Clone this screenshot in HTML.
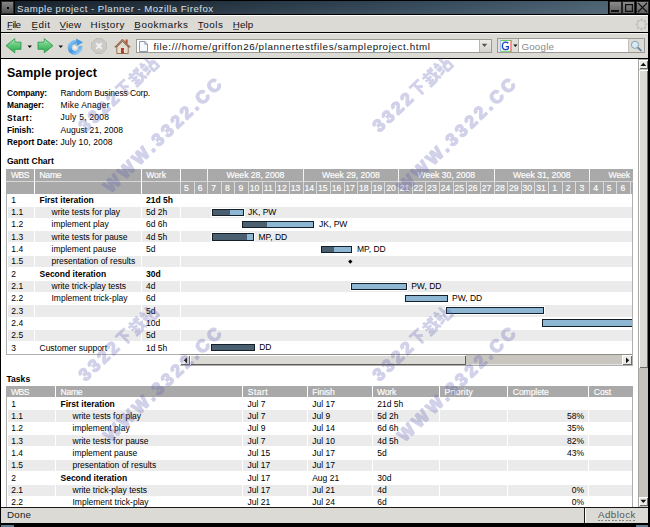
<!DOCTYPE html><html><head><meta charset="utf-8"><style>html,body{margin:0;padding:0;width:650px;height:527px;overflow:hidden;background:#fff}.t{position:absolute;white-space:nowrap;font-family:"Liberation Sans",sans-serif;line-height:1}</style></head><body><div style="position:relative;width:650px;height:527px;overflow:hidden"><div style="position:absolute;left:0px;top:0px;width:650px;height:527px;background:#000"></div><div style="position:absolute;left:15px;top:1px;width:593px;height:13px;background:linear-gradient(90deg,#17222d 0%,#23323f 35%,#34495a 70%,#4a6170 100%)"></div><div style="position:absolute;left:15px;top:1px;width:593px;height:13px;background:linear-gradient(180deg,rgba(255,255,255,0.00),rgba(255,255,255,0.06))"></div><div style="position:absolute;left:1px;top:1px;width:13px;height:13px;background:linear-gradient(180deg,#8a8a8a,#4a4a4a);box-shadow:inset 0 0 0 1px #2a2a2a"></div><div style="position:absolute;left:6.5px;top:6.5px;width:2px;height:2px;background:#000"></div><div style="position:absolute;left:608.5px;top:1px;width:13px;height:13px;background:linear-gradient(180deg,#8f8f8f,#5a5a5a);box-shadow:inset 0 0 0 1px #222"></div><div style="position:absolute;left:622px;top:1px;width:13px;height:13px;background:linear-gradient(180deg,#8f8f8f,#5a5a5a);box-shadow:inset 0 0 0 1px #222"></div><div style="position:absolute;left:635.5px;top:1px;width:13px;height:13px;background:linear-gradient(180deg,#8f8f8f,#5a5a5a);box-shadow:inset 0 0 0 1px #222"></div><div style="position:absolute;left:611px;top:10px;width:8px;height:1.5px;background:#111"></div><div style="position:absolute;left:624.5px;top:3.5px;width:8px;height:8px;box-shadow:inset 0 0 0 1.2px #111"></div><div style="position:absolute;left:1px;top:15px;width:647px;height:17px;background:#dcdad5;border-top:1px solid #fff;box-sizing:border-box"></div><div style="position:absolute;left:1px;top:33px;width:647px;height:25px;background:#dcdad5;border-top:1px solid #f4f3f1;box-sizing:border-box"></div><div style="position:absolute;left:1px;top:59px;width:638px;height:448px;background:#fff"></div><div style="position:absolute;left:7px;top:29px;width:5px;height:1px;background:#555"></div><div style="position:absolute;left:31.5px;top:29px;width:5px;height:1px;background:#555"></div><div style="position:absolute;left:59.5px;top:29px;width:6px;height:1px;background:#555"></div><div style="position:absolute;left:104px;top:29px;width:4px;height:1px;background:#555"></div><div style="position:absolute;left:134.3px;top:29px;width:6px;height:1px;background:#555"></div><div style="position:absolute;left:197.8px;top:29px;width:5px;height:1px;background:#555"></div><div style="position:absolute;left:232.7px;top:29px;width:6px;height:1px;background:#555"></div><div style="position:absolute;left:135.5px;top:38.5px;width:356px;height:14.5px;background:#fff;box-shadow:inset 0 0 0 1px #9c9a94"></div><div style="position:absolute;left:479px;top:39.5px;width:11.5px;height:12.5px;background:linear-gradient(180deg,#eeede9,#d5d3ce);border-left:1px solid #b8b6b0;box-sizing:border-box"></div><div style="position:absolute;left:497px;top:38.3px;width:147.5px;height:14.7px;background:#fff;box-shadow:inset 0 0 0 1px #9c9a94"></div><div style="position:absolute;left:498px;top:39.3px;width:20.5px;height:12.7px;background:#e2e0db;border-right:1px solid #a9a7a2;box-sizing:border-box"></div><div style="position:absolute;left:627.5px;top:39.3px;width:16px;height:12.7px;background:#dedcd7;border-left:1px solid #c3c1bc;box-sizing:border-box"></div><div style="position:absolute;left:638px;top:59px;width:10px;height:448px;background:#c5c2bc;border-left:1px solid #a8a6a1;box-sizing:border-box"></div><div style="position:absolute;left:638px;top:59px;width:10px;height:10.2px;background:#ebeae6;box-shadow:inset 1px 1px 0 #a8a6a1,inset 2px 2px 0 #fff,inset -1px -1px 0 #6e6c68"></div><div style="position:absolute;left:638px;top:70px;width:10px;height:298px;background:#dcdad5;box-shadow:inset 1px 0 0 #a8a6a1,inset 2px 1px 0 #fff,inset -1px -1px 0 #6e6c68"></div><div style="position:absolute;left:638px;top:496.5px;width:10px;height:9.5px;background:#ebeae6;box-shadow:inset 1px 0 0 #a8a6a1,inset 2px 1px 0 #fff,inset -1px -1px 0 #6e6c68"></div><div style="position:absolute;left:1px;top:507px;width:647px;height:16px;background:#dcdad5;border-top:1px solid #1a1a1a;box-sizing:border-box"></div><div style="position:absolute;left:584px;top:508px;width:1px;height:15px;background:#1a1a1a"></div><div style="position:absolute;left:585px;top:508px;width:1px;height:15px;background:#fff"></div><div style="position:absolute;left:598px;top:519.5px;width:37px;height:1px;background:repeating-linear-gradient(90deg,#888 0 2px,transparent 2px 3.5px)"></div><div style="position:absolute;left:1px;top:525px;width:13px;height:1.5px;background:#5b7a8e"></div><div style="position:absolute;left:635.5px;top:525px;width:12.5px;height:1.5px;background:#5b7a8e"></div><div style="position:absolute;left:6px;top:169px;width:1px;height:186px;background:#b0b0b0"></div><div style="position:absolute;left:6px;top:353.5px;width:174.5px;height:1px;background:#b0b0b0"></div><div style="position:absolute;left:632px;top:169px;width:1px;height:197px;background:#b0b0b0"></div><div style="position:absolute;left:180.4px;top:364.5px;width:452.6px;height:1px;background:#b0b0b0"></div><div style="position:absolute;left:6px;top:169.2px;width:626.5px;height:11.4px;background:#a9a9a9"></div><div style="position:absolute;left:6px;top:182px;width:626.5px;height:11.8px;background:#a9a9a9"></div><div style="position:absolute;left:6px;top:180.6px;width:626.5px;height:1.4px;background:#d8d8d8"></div><div style="position:absolute;left:33.6px;top:169.2px;width:1.2px;height:24.6px;background:#fff"></div><div style="position:absolute;left:141.2px;top:169.2px;width:1.2px;height:24.6px;background:#fff"></div><div style="position:absolute;left:179.6px;top:169.2px;width:1.2px;height:24.6px;background:#fff"></div><div style="position:absolute;left:207.202px;top:169.2px;width:1px;height:11.4px;background:#f4f4f4"></div><div style="position:absolute;left:302.654px;top:169.2px;width:1px;height:11.4px;background:#f4f4f4"></div><div style="position:absolute;left:398.106px;top:169.2px;width:1px;height:11.4px;background:#f4f4f4"></div><div style="position:absolute;left:493.558px;top:169.2px;width:1px;height:11.4px;background:#f4f4f4"></div><div style="position:absolute;left:589.01px;top:169.2px;width:1px;height:11.4px;background:#f4f4f4"></div><div style="position:absolute;left:179.93px;top:182px;width:1px;height:11.8px;background:#dadada"></div><div style="position:absolute;left:193.566px;top:182px;width:1px;height:11.8px;background:#dadada"></div><div style="position:absolute;left:207.202px;top:182px;width:1px;height:11.8px;background:#dadada"></div><div style="position:absolute;left:220.83800000000002px;top:182px;width:1px;height:11.8px;background:#dadada"></div><div style="position:absolute;left:234.474px;top:182px;width:1px;height:11.8px;background:#dadada"></div><div style="position:absolute;left:248.11px;top:182px;width:1px;height:11.8px;background:#dadada"></div><div style="position:absolute;left:261.746px;top:182px;width:1px;height:11.8px;background:#dadada"></div><div style="position:absolute;left:275.382px;top:182px;width:1px;height:11.8px;background:#dadada"></div><div style="position:absolute;left:289.01800000000003px;top:182px;width:1px;height:11.8px;background:#dadada"></div><div style="position:absolute;left:302.654px;top:182px;width:1px;height:11.8px;background:#dadada"></div><div style="position:absolute;left:316.28999999999996px;top:182px;width:1px;height:11.8px;background:#dadada"></div><div style="position:absolute;left:329.926px;top:182px;width:1px;height:11.8px;background:#dadada"></div><div style="position:absolute;left:343.562px;top:182px;width:1px;height:11.8px;background:#dadada"></div><div style="position:absolute;left:357.198px;top:182px;width:1px;height:11.8px;background:#dadada"></div><div style="position:absolute;left:370.834px;top:182px;width:1px;height:11.8px;background:#dadada"></div><div style="position:absolute;left:384.47px;top:182px;width:1px;height:11.8px;background:#dadada"></div><div style="position:absolute;left:398.106px;top:182px;width:1px;height:11.8px;background:#dadada"></div><div style="position:absolute;left:411.74199999999996px;top:182px;width:1px;height:11.8px;background:#dadada"></div><div style="position:absolute;left:425.378px;top:182px;width:1px;height:11.8px;background:#dadada"></div><div style="position:absolute;left:439.014px;top:182px;width:1px;height:11.8px;background:#dadada"></div><div style="position:absolute;left:452.65px;top:182px;width:1px;height:11.8px;background:#dadada"></div><div style="position:absolute;left:466.286px;top:182px;width:1px;height:11.8px;background:#dadada"></div><div style="position:absolute;left:479.92199999999997px;top:182px;width:1px;height:11.8px;background:#dadada"></div><div style="position:absolute;left:493.558px;top:182px;width:1px;height:11.8px;background:#dadada"></div><div style="position:absolute;left:507.194px;top:182px;width:1px;height:11.8px;background:#dadada"></div><div style="position:absolute;left:520.8299999999999px;top:182px;width:1px;height:11.8px;background:#dadada"></div><div style="position:absolute;left:534.466px;top:182px;width:1px;height:11.8px;background:#dadada"></div><div style="position:absolute;left:548.102px;top:182px;width:1px;height:11.8px;background:#dadada"></div><div style="position:absolute;left:561.738px;top:182px;width:1px;height:11.8px;background:#dadada"></div><div style="position:absolute;left:575.374px;top:182px;width:1px;height:11.8px;background:#dadada"></div><div style="position:absolute;left:589.01px;top:182px;width:1px;height:11.8px;background:#dadada"></div><div style="position:absolute;left:602.646px;top:182px;width:1px;height:11.8px;background:#dadada"></div><div style="position:absolute;left:616.2819999999999px;top:182px;width:1px;height:11.8px;background:#dadada"></div><div style="position:absolute;left:629.918px;top:182px;width:1px;height:11.8px;background:#dadada"></div><div style="position:absolute;left:8px;top:206.55px;width:25.6px;height:11.2px;background:#ebebeb"></div><div style="position:absolute;left:34.8px;top:206.55px;width:106.4px;height:11.2px;background:#ebebeb"></div><div style="position:absolute;left:142.4px;top:206.55px;width:37.2px;height:11.2px;background:#ebebeb"></div><div style="position:absolute;left:180.8px;top:206.55px;width:451.2px;height:11.2px;background:#ebebeb"></div><div style="position:absolute;left:8px;top:231.25px;width:25.6px;height:11.2px;background:#ebebeb"></div><div style="position:absolute;left:34.8px;top:231.25px;width:106.4px;height:11.2px;background:#ebebeb"></div><div style="position:absolute;left:142.4px;top:231.25px;width:37.2px;height:11.2px;background:#ebebeb"></div><div style="position:absolute;left:180.8px;top:231.25px;width:451.2px;height:11.2px;background:#ebebeb"></div><div style="position:absolute;left:8px;top:255.95000000000002px;width:25.6px;height:11.2px;background:#ebebeb"></div><div style="position:absolute;left:34.8px;top:255.95000000000002px;width:106.4px;height:11.2px;background:#ebebeb"></div><div style="position:absolute;left:142.4px;top:255.95000000000002px;width:37.2px;height:11.2px;background:#ebebeb"></div><div style="position:absolute;left:180.8px;top:255.95000000000002px;width:451.2px;height:11.2px;background:#ebebeb"></div><div style="position:absolute;left:8px;top:280.65000000000003px;width:25.6px;height:11.2px;background:#ebebeb"></div><div style="position:absolute;left:34.8px;top:280.65000000000003px;width:106.4px;height:11.2px;background:#ebebeb"></div><div style="position:absolute;left:142.4px;top:280.65000000000003px;width:37.2px;height:11.2px;background:#ebebeb"></div><div style="position:absolute;left:180.8px;top:280.65000000000003px;width:451.2px;height:11.2px;background:#ebebeb"></div><div style="position:absolute;left:8px;top:305.35px;width:25.6px;height:11.2px;background:#ebebeb"></div><div style="position:absolute;left:34.8px;top:305.35px;width:106.4px;height:11.2px;background:#ebebeb"></div><div style="position:absolute;left:142.4px;top:305.35px;width:37.2px;height:11.2px;background:#ebebeb"></div><div style="position:absolute;left:180.8px;top:305.35px;width:451.2px;height:11.2px;background:#ebebeb"></div><div style="position:absolute;left:8px;top:330.05px;width:25.6px;height:11.2px;background:#ebebeb"></div><div style="position:absolute;left:34.8px;top:330.05px;width:106.4px;height:11.2px;background:#ebebeb"></div><div style="position:absolute;left:142.4px;top:330.05px;width:37.2px;height:11.2px;background:#ebebeb"></div><div style="position:absolute;left:180.8px;top:330.05px;width:451.2px;height:11.2px;background:#ebebeb"></div><div style="position:absolute;left:348.8px;top:260.3px;width:2.6px;height:2.6px;background:#000;transform:rotate(45deg)"></div><div style="position:absolute;left:180.4px;top:354px;width:451.6px;height:11px;background:#c9c6c0;border-top:1px solid #8e8c87;border-bottom:1px solid #e4e2de;box-sizing:border-box"></div><div style="position:absolute;left:180.4px;top:354.5px;width:9.8px;height:10.2px;background:#ebeae6;box-shadow:inset 1px 1px 0 #fff,inset -1px -1px 0 #6e6c68"></div><div style="position:absolute;left:190.2px;top:354.5px;width:275.5px;height:10.2px;background:#dcdad5;box-shadow:inset 1px 1px 0 #fff,inset -1px -1px 0 #5e5c58"></div><div style="position:absolute;left:622.3px;top:354.5px;width:9.5px;height:10.2px;background:#ebeae6;box-shadow:inset 1px 1px 0 #fff,inset -1px -1px 0 #6e6c68"></div><div style="position:absolute;left:6px;top:386px;width:1px;height:121px;background:#b0b0b0"></div><div style="position:absolute;left:632px;top:386px;width:1px;height:121px;background:#b0b0b0"></div><div style="position:absolute;left:6px;top:385.8px;width:626.5px;height:11.7px;background:#a9a9a9"></div><div style="position:absolute;left:55.0px;top:385.8px;width:1.2px;height:11.7px;background:#fff"></div><div style="position:absolute;left:242.0px;top:385.8px;width:1.2px;height:11.7px;background:#fff"></div><div style="position:absolute;left:306.6px;top:385.8px;width:1.2px;height:11.7px;background:#fff"></div><div style="position:absolute;left:371.90000000000003px;top:385.8px;width:1.2px;height:11.7px;background:#fff"></div><div style="position:absolute;left:439.0px;top:385.8px;width:1.2px;height:11.7px;background:#fff"></div><div style="position:absolute;left:506.6px;top:385.8px;width:1.2px;height:11.7px;background:#fff"></div><div style="position:absolute;left:588.0px;top:385.8px;width:1.2px;height:11.7px;background:#fff"></div><div style="position:absolute;left:8px;top:410.46000000000004px;width:47.0px;height:11.2px;background:#ebebeb"></div><div style="position:absolute;left:56.199999999999996px;top:410.46000000000004px;width:185.8px;height:11.2px;background:#ebebeb"></div><div style="position:absolute;left:243.20000000000002px;top:410.46000000000004px;width:63.400000000000006px;height:11.2px;background:#ebebeb"></div><div style="position:absolute;left:307.8px;top:410.46000000000004px;width:64.10000000000002px;height:11.2px;background:#ebebeb"></div><div style="position:absolute;left:373.1px;top:410.46000000000004px;width:65.89999999999998px;height:11.2px;background:#ebebeb"></div><div style="position:absolute;left:440.2px;top:410.46000000000004px;width:66.40000000000003px;height:11.2px;background:#ebebeb"></div><div style="position:absolute;left:507.8px;top:410.46000000000004px;width:80.19999999999999px;height:11.2px;background:#ebebeb"></div><div style="position:absolute;left:589.1999999999999px;top:410.46000000000004px;width:42.90000000000009px;height:11.2px;background:#ebebeb"></div><div style="position:absolute;left:8px;top:435.18px;width:47.0px;height:11.2px;background:#ebebeb"></div><div style="position:absolute;left:56.199999999999996px;top:435.18px;width:185.8px;height:11.2px;background:#ebebeb"></div><div style="position:absolute;left:243.20000000000002px;top:435.18px;width:63.400000000000006px;height:11.2px;background:#ebebeb"></div><div style="position:absolute;left:307.8px;top:435.18px;width:64.10000000000002px;height:11.2px;background:#ebebeb"></div><div style="position:absolute;left:373.1px;top:435.18px;width:65.89999999999998px;height:11.2px;background:#ebebeb"></div><div style="position:absolute;left:440.2px;top:435.18px;width:66.40000000000003px;height:11.2px;background:#ebebeb"></div><div style="position:absolute;left:507.8px;top:435.18px;width:80.19999999999999px;height:11.2px;background:#ebebeb"></div><div style="position:absolute;left:589.1999999999999px;top:435.18px;width:42.90000000000009px;height:11.2px;background:#ebebeb"></div><div style="position:absolute;left:8px;top:459.90000000000003px;width:47.0px;height:11.2px;background:#ebebeb"></div><div style="position:absolute;left:56.199999999999996px;top:459.90000000000003px;width:185.8px;height:11.2px;background:#ebebeb"></div><div style="position:absolute;left:243.20000000000002px;top:459.90000000000003px;width:63.400000000000006px;height:11.2px;background:#ebebeb"></div><div style="position:absolute;left:307.8px;top:459.90000000000003px;width:64.10000000000002px;height:11.2px;background:#ebebeb"></div><div style="position:absolute;left:373.1px;top:459.90000000000003px;width:65.89999999999998px;height:11.2px;background:#ebebeb"></div><div style="position:absolute;left:440.2px;top:459.90000000000003px;width:66.40000000000003px;height:11.2px;background:#ebebeb"></div><div style="position:absolute;left:507.8px;top:459.90000000000003px;width:80.19999999999999px;height:11.2px;background:#ebebeb"></div><div style="position:absolute;left:589.1999999999999px;top:459.90000000000003px;width:42.90000000000009px;height:11.2px;background:#ebebeb"></div><div style="position:absolute;left:8px;top:484.62px;width:47.0px;height:11.2px;background:#ebebeb"></div><div style="position:absolute;left:56.199999999999996px;top:484.62px;width:185.8px;height:11.2px;background:#ebebeb"></div><div style="position:absolute;left:243.20000000000002px;top:484.62px;width:63.400000000000006px;height:11.2px;background:#ebebeb"></div><div style="position:absolute;left:307.8px;top:484.62px;width:64.10000000000002px;height:11.2px;background:#ebebeb"></div><div style="position:absolute;left:373.1px;top:484.62px;width:65.89999999999998px;height:11.2px;background:#ebebeb"></div><div style="position:absolute;left:440.2px;top:484.62px;width:66.40000000000003px;height:11.2px;background:#ebebeb"></div><div style="position:absolute;left:507.8px;top:484.62px;width:80.19999999999999px;height:11.2px;background:#ebebeb"></div><div style="position:absolute;left:589.1999999999999px;top:484.62px;width:42.90000000000009px;height:11.2px;background:#ebebeb"></div><svg style="position:absolute;left:635.5px;top:1px" width="13" height="13"><path d="M2 2L11 11M11 2L2 11" stroke="#111" stroke-width="1.1"/></svg><svg style="position:absolute;left:635px;top:18px" width="13" height="13"><g fill="#c4c2bd"><circle cx="11.10" cy="6.50" r="1.4"/><circle cx="9.75" cy="9.75" r="1.4"/><circle cx="6.50" cy="11.10" r="1.4"/><circle cx="3.25" cy="9.75" r="1.4"/><circle cx="1.90" cy="6.50" r="1.4"/><circle cx="3.25" cy="3.25" r="1.4"/><circle cx="6.50" cy="1.90" r="1.4"/><circle cx="9.75" cy="3.25" r="1.4"/></g></svg><svg style="position:absolute;left:5px;top:38px" width="17" height="16" viewBox="0 0 17 16"><defs><linearGradient id="ga" x1="0" y1="0" x2="0" y2="1"><stop offset="0" stop-color="#b2e9bf"/><stop offset="0.45" stop-color="#62c97c"/><stop offset="0.8" stop-color="#3db35a"/><stop offset="1" stop-color="#8fd67e"/></linearGradient></defs><path d="M1 7.7L9.8 0.6Q9.3 3 10.5 4.2H16V11.3H10.5Q9.3 12.5 9.8 14.9Z" fill="url(#ga)" stroke="#2e9c4c" stroke-width="0.9"/></svg><svg style="position:absolute;left:36.5px;top:38px" width="17" height="16" viewBox="0 0 17 16"><path d="M16 7.7L7.2 0.6Q7.7 3 6.5 4.2H1V11.3H6.5Q7.7 12.5 7.2 14.9Z" fill="url(#ga)" stroke="#2e9c4c" stroke-width="0.9"/></svg><svg style="position:absolute;left:26.5px;top:44.5px" width="6" height="4"><path d="M0.5 0.5H5L2.75 3Z" fill="#111"/></svg><svg style="position:absolute;left:57.5px;top:44.5px" width="6" height="4"><path d="M0.5 0.5H5L2.75 3Z" fill="#111"/></svg><svg style="position:absolute;left:66.5px;top:37.5px" width="17" height="17" viewBox="0 0 17 17"><defs><linearGradient id="gr" x1="0" y1="0" x2="1" y2="1"><stop offset="0" stop-color="#8cc8f4"/><stop offset="0.5" stop-color="#3f95e2"/><stop offset="1" stop-color="#a9d4f4"/></linearGradient></defs><path d="M13.2 8A5.4 5.4 0 1 1 9.6 4.4" fill="none" stroke="url(#gr)" stroke-width="4"/><path d="M9.2 0.6L16 4.3L9.6 8.2Z" fill="#4a9be4"/><circle cx="8" cy="9.6" r="1.3" fill="#fff"/></svg><svg style="position:absolute;left:90.5px;top:37.5px" width="16" height="16" viewBox="0 0 16 16"><path d="M5 0.6H11L15.4 5V11L11 15.4H5L0.6 11V5Z" fill="#cdcbc7" stroke="#b8b6b2" stroke-width="0.8"/><path d="M5.3 5.3L10.7 10.7M10.7 5.3L5.3 10.7" stroke="#f2f2f2" stroke-width="2"/></svg><svg style="position:absolute;left:113.5px;top:37.5px" width="17" height="17" viewBox="0 0 17 17"><rect x="11.5" y="1.5" width="2.2" height="4" fill="#c4553a"/><path d="M2.8 8.5V15.5H14.2V8.5" fill="#eadccd" stroke="#8e6a4e" stroke-width="0.9"/><path d="M8.5 1.2L0.8 9H2.8L8.5 3.3L14.2 9H16.2Z" fill="#b98563" stroke="#7b5538" stroke-width="0.8"/><rect x="7" y="10" width="3" height="5.5" fill="#a8402e"/><rect x="9" y="12.5" width="0.8" height="0.8" fill="#e8d040"/></svg><svg style="position:absolute;left:481px;top:43px" width="7" height="5"><path d="M0.8 0.8H6.2L3.5 4Z" fill="#555"/></svg><svg style="position:absolute;left:138.5px;top:40.5px" width="9" height="11" viewBox="0 0 9 11"><path d="M0.5 0.5H5.8L8.5 3.2V10.5H0.5Z" fill="#f6f8fb" stroke="#6f7f99" stroke-width="0.8"/><path d="M5.8 0.5V3.2H8.5" fill="none" stroke="#6f7f99" stroke-width="0.7"/></svg><svg style="position:absolute;left:499.5px;top:40px" width="12" height="12" viewBox="0 0 12 12"><rect x="0.5" y="0.5" width="11" height="11" fill="#fff"/><path d="M0.5 0.5H11.5" stroke="#5ccf5c" stroke-width="1"/><path d="M0.5 11.3H11.5" stroke="#5ccf5c" stroke-width="1"/><path d="M0.7 0.5V11.5" stroke="#8fb4f0" stroke-width="1"/><path d="M11 0.5V11.5" stroke="#e33" stroke-width="1"/><path d="M8.3 3.2Q7.3 2.2 5.6 2.2Q2.4 2.2 2.4 6Q2.4 9.6 5.6 9.6Q7.6 9.6 8.4 8.6V6.6H5.8" fill="none" stroke="#1a3fbf" stroke-width="1.3"/></svg><svg style="position:absolute;left:512.5px;top:44px" width="5" height="4"><path d="M0.3 0.5H4.5L2.4 3Z" fill="#111"/></svg><svg style="position:absolute;left:630px;top:40px" width="13" height="12" viewBox="0 0 13 12"><circle cx="5" cy="4.8" r="3.6" fill="#d9eaf5" stroke="#8aa2b2" stroke-width="1"/><path d="M7.6 7.4L11.5 11" stroke="#6e8796" stroke-width="1.8"/></svg><svg style="position:absolute;left:640px;top:61.5px" width="7" height="5"><path d="M0.5 4H6.2L3.35 0.8Z" fill="#111"/></svg><svg style="position:absolute;left:640px;top:499px" width="7" height="5"><path d="M0.5 0.8H6.2L3.35 4Z" fill="#111"/></svg><div style="position:absolute;left:180.43px;top:169px;width:451.6px;height:190px;overflow:hidden"><div style="position:absolute;left:31.27px;top:39.80px;width:32.00px;height:7.2px;background:linear-gradient(90deg,#4a6070 0 18.2px,#8eb7d3 18.2px);box-shadow:inset 0 0 0 1px #142029,0 0 0 1px #fff;box-sizing:border-box"></div><div style="position:absolute;left:62.07px;top:52.09px;width:72.00px;height:7.2px;background:linear-gradient(90deg,#4a6070 0 25.2px,#8eb7d3 25.2px);box-shadow:inset 0 0 0 1px #142029,0 0 0 1px #fff;box-sizing:border-box"></div><div style="position:absolute;left:31.27px;top:64.38px;width:42.70px;height:7.2px;background:linear-gradient(90deg,#4a6070 0 34.8px,#8eb7d3 34.8px);box-shadow:inset 0 0 0 1px #142029,0 0 0 1px #fff;box-sizing:border-box"></div><div style="position:absolute;left:140.37px;top:76.67px;width:31.20px;height:7.2px;background:linear-gradient(90deg,#4a6070 0 13.0px,#8eb7d3 13.0px);box-shadow:inset 0 0 0 1px #142029,0 0 0 1px #fff;box-sizing:border-box"></div><div style="position:absolute;left:170.57px;top:113.54px;width:56.20px;height:7.2px;background:#8eb7d3;box-shadow:inset 0 0 0 1px #142029,0 0 0 1px #fff;box-sizing:border-box"></div><div style="position:absolute;left:224.77px;top:125.83px;width:42.40px;height:7.2px;background:#8eb7d3;box-shadow:inset 0 0 0 1px #142029,0 0 0 1px #fff;box-sizing:border-box"></div><div style="position:absolute;left:265.97px;top:138.12px;width:97.80px;height:7.2px;background:#8eb7d3;box-shadow:inset 0 0 0 1px #142029,0 0 0 1px #fff;box-sizing:border-box"></div><div style="position:absolute;left:361.97px;top:150.41px;width:97.60px;height:7.2px;background:#8eb7d3;box-shadow:inset 0 0 0 1px #142029,0 0 0 1px #fff;box-sizing:border-box"></div><div style="position:absolute;left:31.07px;top:174.99px;width:43.90px;height:7.2px;background:#4a6070;box-shadow:inset 0 0 0 1px #142029,0 0 0 1px #fff;box-sizing:border-box"></div></div><svg style="position:absolute;left:183px;top:356.5px" width="5" height="7"><path d="M4 0.5V6.2L0.8 3.35Z" fill="#111"/></svg><svg style="position:absolute;left:625px;top:357px" width="5" height="7"><path d="M1 0.5V6.2L4.2 3.35Z" fill="#111"/></svg><div class="t" style="top:19.70px;font-size:9.8px;color:#111;letter-spacing:-0.599px;left:7.00px;">File</div><div class="t" style="top:19.70px;font-size:9.8px;color:#111;letter-spacing:0.536px;left:31.50px;">Edit</div><div class="t" style="top:19.70px;font-size:9.8px;color:#111;letter-spacing:0.146px;left:59.50px;">View</div><div class="t" style="top:19.70px;font-size:9.8px;color:#111;letter-spacing:0.586px;left:90.50px;">History</div><div class="t" style="top:19.70px;font-size:9.8px;color:#111;letter-spacing:0.575px;left:134.30px;">Bookmarks</div><div class="t" style="top:19.70px;font-size:9.8px;color:#111;letter-spacing:0.581px;left:197.80px;">Tools</div><div class="t" style="top:19.70px;font-size:9.8px;color:#111;letter-spacing:0.115px;left:232.70px;">Help</div><div class="t" style="top:3.87px;font-size:9.6px;color:#d8e0e5;letter-spacing:0.489px;left:17.00px;">Sample project - Planner - Mozilla Firefox</div><div class="t" style="top:41.50px;font-size:9.8px;color:#111;letter-spacing:0.604px;left:153.40px;">file:///home/griffon26/plannertestfiles/sampleproject.html</div><div class="t" style="top:41.50px;font-size:9.8px;color:#8a8a8a;letter-spacing:0.201px;left:521.40px;">Google</div><div class="t" style="top:509.70px;font-size:9.8px;color:#222;letter-spacing:0.193px;left:7.00px;">Done</div><div class="t" style="top:509.70px;font-size:9.8px;color:#555;letter-spacing:0.440px;left:598.00px;">Adblock</div><div class="t" style="top:66.70px;font-size:12.4px;color:#000;font-weight:bold;letter-spacing:0.090px;left:6.90px;">Sample project</div><div class="t" style="top:89.19px;font-size:8.4px;color:#000;font-weight:bold;letter-spacing:-0.136px;left:7.00px;">Company:</div><div class="t" style="top:89.10px;font-size:8.5px;color:#000;letter-spacing:-0.122px;left:60.50px;">Random Business Corp.</div><div class="t" style="top:101.36px;font-size:8.4px;color:#000;font-weight:bold;letter-spacing:-0.033px;left:7.00px;">Manager:</div><div class="t" style="top:101.27px;font-size:8.5px;color:#000;letter-spacing:0.175px;left:60.50px;">Mike Anager</div><div class="t" style="top:113.53px;font-size:8.4px;color:#000;font-weight:bold;letter-spacing:0.625px;left:7.00px;">Start:</div><div class="t" style="top:113.44px;font-size:8.5px;color:#000;letter-spacing:0.241px;left:60.50px;">July 5, 2008</div><div class="t" style="top:125.70px;font-size:8.4px;color:#000;font-weight:bold;letter-spacing:-0.076px;left:7.00px;">Finish:</div><div class="t" style="top:125.61px;font-size:8.5px;color:#000;letter-spacing:0.041px;left:60.50px;">August 21, 2008</div><div class="t" style="top:137.87px;font-size:8.4px;color:#000;font-weight:bold;letter-spacing:0.067px;left:7.00px;">Report Date:</div><div class="t" style="top:137.78px;font-size:8.5px;color:#000;letter-spacing:0.118px;left:60.50px;">July 10, 2008</div><div class="t" style="top:157.32px;font-size:8.6px;color:#000;font-weight:bold;letter-spacing:-0.037px;left:6.90px;">Gantt Chart</div><div class="t" style="top:171.12px;font-size:8.6px;color:#fff;letter-spacing:-0.589px;-webkit-text-stroke:0.15px #fff;left:11.00px;">WBS</div><div class="t" style="top:171.12px;font-size:8.6px;color:#fff;letter-spacing:-0.246px;-webkit-text-stroke:0.15px #fff;left:39.40px;">Name</div><div class="t" style="top:171.12px;font-size:8.6px;color:#fff;letter-spacing:-0.035px;-webkit-text-stroke:0.15px #fff;left:146.20px;">Work</div><div class="t" style="top:183.52px;font-size:8.6px;color:#fff;-webkit-text-stroke:0.15px #fff;left:-13.55px;width:400px;text-align:center;">5</div><div class="t" style="top:183.52px;font-size:8.6px;color:#fff;-webkit-text-stroke:0.15px #fff;left:0.08px;width:400px;text-align:center;">6</div><div class="t" style="top:183.52px;font-size:8.6px;color:#fff;-webkit-text-stroke:0.15px #fff;left:13.72px;width:400px;text-align:center;">7</div><div class="t" style="top:183.52px;font-size:8.6px;color:#fff;-webkit-text-stroke:0.15px #fff;left:27.36px;width:400px;text-align:center;">8</div><div class="t" style="top:183.52px;font-size:8.6px;color:#fff;-webkit-text-stroke:0.15px #fff;left:40.99px;width:400px;text-align:center;">9</div><div class="t" style="top:183.52px;font-size:8.6px;color:#fff;-webkit-text-stroke:0.15px #fff;left:54.63px;width:400px;text-align:center;">10</div><div class="t" style="top:183.52px;font-size:8.6px;color:#fff;-webkit-text-stroke:0.15px #fff;left:68.26px;width:400px;text-align:center;">11</div><div class="t" style="top:183.52px;font-size:8.6px;color:#fff;-webkit-text-stroke:0.15px #fff;left:81.90px;width:400px;text-align:center;">12</div><div class="t" style="top:183.52px;font-size:8.6px;color:#fff;-webkit-text-stroke:0.15px #fff;left:95.54px;width:400px;text-align:center;">13</div><div class="t" style="top:183.52px;font-size:8.6px;color:#fff;-webkit-text-stroke:0.15px #fff;left:109.17px;width:400px;text-align:center;">14</div><div class="t" style="top:183.52px;font-size:8.6px;color:#fff;-webkit-text-stroke:0.15px #fff;left:122.81px;width:400px;text-align:center;">15</div><div class="t" style="top:183.52px;font-size:8.6px;color:#fff;-webkit-text-stroke:0.15px #fff;left:136.44px;width:400px;text-align:center;">16</div><div class="t" style="top:183.52px;font-size:8.6px;color:#fff;-webkit-text-stroke:0.15px #fff;left:150.08px;width:400px;text-align:center;">17</div><div class="t" style="top:183.52px;font-size:8.6px;color:#fff;-webkit-text-stroke:0.15px #fff;left:163.72px;width:400px;text-align:center;">18</div><div class="t" style="top:183.52px;font-size:8.6px;color:#fff;-webkit-text-stroke:0.15px #fff;left:177.35px;width:400px;text-align:center;">19</div><div class="t" style="top:183.52px;font-size:8.6px;color:#fff;-webkit-text-stroke:0.15px #fff;left:190.99px;width:400px;text-align:center;">20</div><div class="t" style="top:183.52px;font-size:8.6px;color:#fff;-webkit-text-stroke:0.15px #fff;left:204.62px;width:400px;text-align:center;">21</div><div class="t" style="top:183.52px;font-size:8.6px;color:#fff;-webkit-text-stroke:0.15px #fff;left:218.26px;width:400px;text-align:center;">22</div><div class="t" style="top:183.52px;font-size:8.6px;color:#fff;-webkit-text-stroke:0.15px #fff;left:231.90px;width:400px;text-align:center;">23</div><div class="t" style="top:183.52px;font-size:8.6px;color:#fff;-webkit-text-stroke:0.15px #fff;left:245.53px;width:400px;text-align:center;">24</div><div class="t" style="top:183.52px;font-size:8.6px;color:#fff;-webkit-text-stroke:0.15px #fff;left:259.17px;width:400px;text-align:center;">25</div><div class="t" style="top:183.52px;font-size:8.6px;color:#fff;-webkit-text-stroke:0.15px #fff;left:272.80px;width:400px;text-align:center;">26</div><div class="t" style="top:183.52px;font-size:8.6px;color:#fff;-webkit-text-stroke:0.15px #fff;left:286.44px;width:400px;text-align:center;">27</div><div class="t" style="top:183.52px;font-size:8.6px;color:#fff;-webkit-text-stroke:0.15px #fff;left:300.08px;width:400px;text-align:center;">28</div><div class="t" style="top:183.52px;font-size:8.6px;color:#fff;-webkit-text-stroke:0.15px #fff;left:313.71px;width:400px;text-align:center;">29</div><div class="t" style="top:183.52px;font-size:8.6px;color:#fff;-webkit-text-stroke:0.15px #fff;left:327.35px;width:400px;text-align:center;">30</div><div class="t" style="top:183.52px;font-size:8.6px;color:#fff;-webkit-text-stroke:0.15px #fff;left:340.98px;width:400px;text-align:center;">31</div><div class="t" style="top:183.52px;font-size:8.6px;color:#fff;-webkit-text-stroke:0.15px #fff;left:354.62px;width:400px;text-align:center;">1</div><div class="t" style="top:183.52px;font-size:8.6px;color:#fff;-webkit-text-stroke:0.15px #fff;left:368.26px;width:400px;text-align:center;">2</div><div class="t" style="top:183.52px;font-size:8.6px;color:#fff;-webkit-text-stroke:0.15px #fff;left:381.89px;width:400px;text-align:center;">3</div><div class="t" style="top:183.52px;font-size:8.6px;color:#fff;-webkit-text-stroke:0.15px #fff;left:395.53px;width:400px;text-align:center;">4</div><div class="t" style="top:183.52px;font-size:8.6px;color:#fff;-webkit-text-stroke:0.15px #fff;left:409.16px;width:400px;text-align:center;">5</div><div class="t" style="top:183.52px;font-size:8.6px;color:#fff;-webkit-text-stroke:0.15px #fff;left:422.80px;width:400px;text-align:center;">6</div><div class="t" style="top:171.24px;font-size:8.7px;color:#fff;letter-spacing:-0.048px;-webkit-text-stroke:0.15px #fff;left:55.43px;width:400px;text-align:center;">Week 28, 2008</div><div class="t" style="top:171.24px;font-size:8.7px;color:#fff;letter-spacing:-0.048px;-webkit-text-stroke:0.15px #fff;left:150.88px;width:400px;text-align:center;">Week 29, 2008</div><div class="t" style="top:171.24px;font-size:8.7px;color:#fff;letter-spacing:-0.048px;-webkit-text-stroke:0.15px #fff;left:246.33px;width:400px;text-align:center;">Week 30, 2008</div><div class="t" style="top:171.24px;font-size:8.7px;color:#fff;letter-spacing:-0.048px;-webkit-text-stroke:0.15px #fff;left:341.78px;width:400px;text-align:center;">Week 31, 2008</div><div class="t" style="top:195.60px;font-size:8.5px;color:#000;left:11.30px;">1</div><div class="t" style="top:195.60px;font-size:8.5px;color:#000;font-weight:bold;left:39.50px;">First iteration</div><div class="t" style="top:195.60px;font-size:8.5px;color:#000;font-weight:bold;left:146.00px;">21d 5h</div><div class="t" style="top:207.95px;font-size:8.5px;color:#000;left:11.30px;">1.1</div><div class="t" style="top:207.95px;font-size:8.5px;color:#000;left:51.50px;">write tests for play</div><div class="t" style="top:207.95px;font-size:8.5px;color:#000;left:146.00px;">5d 2h</div><div class="t" style="top:220.30px;font-size:8.5px;color:#000;left:11.30px;">1.2</div><div class="t" style="top:220.30px;font-size:8.5px;color:#000;left:51.50px;">implement play</div><div class="t" style="top:220.30px;font-size:8.5px;color:#000;left:146.00px;">6d 6h</div><div class="t" style="top:232.65px;font-size:8.5px;color:#000;left:11.30px;">1.3</div><div class="t" style="top:232.65px;font-size:8.5px;color:#000;left:51.50px;">write tests for pause</div><div class="t" style="top:232.65px;font-size:8.5px;color:#000;left:146.00px;">4d 5h</div><div class="t" style="top:245.00px;font-size:8.5px;color:#000;left:11.30px;">1.4</div><div class="t" style="top:245.00px;font-size:8.5px;color:#000;left:51.50px;">implement pause</div><div class="t" style="top:245.00px;font-size:8.5px;color:#000;left:146.00px;">5d</div><div class="t" style="top:257.35px;font-size:8.5px;color:#000;left:11.30px;">1.5</div><div class="t" style="top:257.35px;font-size:8.5px;color:#000;left:51.50px;">presentation of results</div><div class="t" style="top:269.70px;font-size:8.5px;color:#000;left:11.30px;">2</div><div class="t" style="top:269.70px;font-size:8.5px;color:#000;font-weight:bold;left:39.50px;">Second iteration</div><div class="t" style="top:269.70px;font-size:8.5px;color:#000;font-weight:bold;left:146.00px;">30d</div><div class="t" style="top:282.05px;font-size:8.5px;color:#000;left:11.30px;">2.1</div><div class="t" style="top:282.05px;font-size:8.5px;color:#000;left:51.50px;">write trick-play tests</div><div class="t" style="top:282.05px;font-size:8.5px;color:#000;left:146.00px;">4d</div><div class="t" style="top:294.40px;font-size:8.5px;color:#000;left:11.30px;">2.2</div><div class="t" style="top:294.40px;font-size:8.5px;color:#000;left:51.50px;">Implement trick-play</div><div class="t" style="top:294.40px;font-size:8.5px;color:#000;left:146.00px;">6d</div><div class="t" style="top:306.75px;font-size:8.5px;color:#000;left:11.30px;">2.3</div><div class="t" style="top:306.75px;font-size:8.5px;color:#000;left:146.00px;">5d</div><div class="t" style="top:319.10px;font-size:8.5px;color:#000;left:11.30px;">2.4</div><div class="t" style="top:319.10px;font-size:8.5px;color:#000;left:146.00px;">10d</div><div class="t" style="top:331.45px;font-size:8.5px;color:#000;left:11.30px;">2.5</div><div class="t" style="top:331.45px;font-size:8.5px;color:#000;left:146.00px;">5d</div><div class="t" style="top:343.80px;font-size:8.5px;color:#000;left:11.30px;">3</div><div class="t" style="top:343.80px;font-size:8.5px;color:#000;left:39.50px;">Customer support</div><div class="t" style="top:343.80px;font-size:8.5px;color:#000;left:146.00px;">1d 5h</div><div class="t" style="top:208.20px;font-size:8.5px;color:#000;left:248.00px;">JK, PW</div><div class="t" style="top:220.49px;font-size:8.5px;color:#000;left:319.00px;">JK, PW</div><div class="t" style="top:232.78px;font-size:8.5px;color:#000;left:258.50px;">MP, DD</div><div class="t" style="top:245.07px;font-size:8.5px;color:#000;left:357.00px;">MP, DD</div><div class="t" style="top:281.94px;font-size:8.5px;color:#000;left:411.20px;">PW, DD</div><div class="t" style="top:294.23px;font-size:8.5px;color:#000;left:452.00px;">PW, DD</div><div class="t" style="top:343.39px;font-size:8.5px;color:#000;left:259.20px;">DD</div><div class="t" style="top:374.92px;font-size:8.6px;color:#000;font-weight:bold;letter-spacing:0.016px;left:6.40px;">Tasks</div><div class="t" style="top:387.92px;font-size:8.6px;color:#fff;letter-spacing:-0.489px;-webkit-text-stroke:0.15px #fff;left:11.00px;">WBS</div><div class="t" style="top:387.92px;font-size:8.6px;color:#fff;letter-spacing:-0.312px;-webkit-text-stroke:0.15px #fff;left:60.60px;">Name</div><div class="t" style="top:387.92px;font-size:8.6px;color:#fff;letter-spacing:0.461px;-webkit-text-stroke:0.15px #fff;left:247.70px;">Start</div><div class="t" style="top:387.92px;font-size:8.6px;color:#fff;letter-spacing:-0.087px;-webkit-text-stroke:0.15px #fff;left:312.30px;">Finish</div><div class="t" style="top:387.92px;font-size:8.6px;color:#fff;letter-spacing:-0.202px;-webkit-text-stroke:0.15px #fff;left:376.90px;">Work</div><div class="t" style="top:387.92px;font-size:8.6px;color:#fff;letter-spacing:0.221px;-webkit-text-stroke:0.15px #fff;left:444.60px;">Priority</div><div class="t" style="top:387.92px;font-size:8.6px;color:#fff;letter-spacing:-0.097px;-webkit-text-stroke:0.15px #fff;left:512.80px;">Complete</div><div class="t" style="top:387.92px;font-size:8.6px;color:#fff;letter-spacing:-0.091px;-webkit-text-stroke:0.15px #fff;left:593.80px;">Cost</div><div class="t" style="top:399.50px;font-size:8.5px;color:#000;left:11.20px;">1</div><div class="t" style="top:399.50px;font-size:8.5px;color:#000;font-weight:bold;left:60.50px;">First iteration</div><div class="t" style="top:399.50px;font-size:8.5px;color:#000;left:247.60px;">Jul 7</div><div class="t" style="top:399.50px;font-size:8.5px;color:#000;left:312.20px;">Jul 17</div><div class="t" style="top:399.50px;font-size:8.5px;color:#000;left:377.30px;">21d 5h</div><div class="t" style="top:411.86px;font-size:8.5px;color:#000;left:11.20px;">1.1</div><div class="t" style="top:411.86px;font-size:8.5px;color:#000;left:72.50px;">write tests for play</div><div class="t" style="top:411.86px;font-size:8.5px;color:#000;left:247.60px;">Jul 7</div><div class="t" style="top:411.86px;font-size:8.5px;color:#000;left:312.20px;">Jul 9</div><div class="t" style="top:411.86px;font-size:8.5px;color:#000;left:377.30px;">5d 2h</div><div class="t" style="top:411.86px;font-size:8.5px;color:#000;right:66.00px;text-align:right;">58%</div><div class="t" style="top:424.22px;font-size:8.5px;color:#000;left:11.20px;">1.2</div><div class="t" style="top:424.22px;font-size:8.5px;color:#000;left:72.50px;">implement play</div><div class="t" style="top:424.22px;font-size:8.5px;color:#000;left:247.60px;">Jul 9</div><div class="t" style="top:424.22px;font-size:8.5px;color:#000;left:312.20px;">Jul 14</div><div class="t" style="top:424.22px;font-size:8.5px;color:#000;left:377.30px;">6d 6h</div><div class="t" style="top:424.22px;font-size:8.5px;color:#000;right:66.00px;text-align:right;">35%</div><div class="t" style="top:436.58px;font-size:8.5px;color:#000;left:11.20px;">1.3</div><div class="t" style="top:436.58px;font-size:8.5px;color:#000;left:72.50px;">write tests for pause</div><div class="t" style="top:436.58px;font-size:8.5px;color:#000;left:247.60px;">Jul 7</div><div class="t" style="top:436.58px;font-size:8.5px;color:#000;left:312.20px;">Jul 10</div><div class="t" style="top:436.58px;font-size:8.5px;color:#000;left:377.30px;">4d 5h</div><div class="t" style="top:436.58px;font-size:8.5px;color:#000;right:66.00px;text-align:right;">82%</div><div class="t" style="top:448.94px;font-size:8.5px;color:#000;left:11.20px;">1.4</div><div class="t" style="top:448.94px;font-size:8.5px;color:#000;left:72.50px;">implement pause</div><div class="t" style="top:448.94px;font-size:8.5px;color:#000;left:247.60px;">Jul 15</div><div class="t" style="top:448.94px;font-size:8.5px;color:#000;left:312.20px;">Jul 17</div><div class="t" style="top:448.94px;font-size:8.5px;color:#000;left:377.30px;">5d</div><div class="t" style="top:448.94px;font-size:8.5px;color:#000;right:66.00px;text-align:right;">43%</div><div class="t" style="top:461.30px;font-size:8.5px;color:#000;left:11.20px;">1.5</div><div class="t" style="top:461.30px;font-size:8.5px;color:#000;left:72.50px;">presentation of results</div><div class="t" style="top:461.30px;font-size:8.5px;color:#000;left:247.60px;">Jul 17</div><div class="t" style="top:461.30px;font-size:8.5px;color:#000;left:312.20px;">Jul 17</div><div class="t" style="top:461.30px;font-size:8.5px;color:#000;left:377.30px;"></div><div class="t" style="top:473.66px;font-size:8.5px;color:#000;left:11.20px;">2</div><div class="t" style="top:473.66px;font-size:8.5px;color:#000;font-weight:bold;left:60.50px;">Second iteration</div><div class="t" style="top:473.66px;font-size:8.5px;color:#000;left:247.60px;">Jul 17</div><div class="t" style="top:473.66px;font-size:8.5px;color:#000;left:312.20px;">Aug 21</div><div class="t" style="top:473.66px;font-size:8.5px;color:#000;left:377.30px;">30d</div><div class="t" style="top:486.02px;font-size:8.5px;color:#000;left:11.20px;">2.1</div><div class="t" style="top:486.02px;font-size:8.5px;color:#000;left:72.50px;">write trick-play tests</div><div class="t" style="top:486.02px;font-size:8.5px;color:#000;left:247.60px;">Jul 17</div><div class="t" style="top:486.02px;font-size:8.5px;color:#000;left:312.20px;">Jul 21</div><div class="t" style="top:486.02px;font-size:8.5px;color:#000;left:377.30px;">4d</div><div class="t" style="top:486.02px;font-size:8.5px;color:#000;right:66.00px;text-align:right;">0%</div><div class="t" style="top:498.38px;font-size:8.5px;color:#000;left:11.20px;">2.2</div><div class="t" style="top:498.38px;font-size:8.5px;color:#000;left:72.50px;">Implement trick-play</div><div class="t" style="top:498.38px;font-size:8.5px;color:#000;left:247.60px;">Jul 21</div><div class="t" style="top:498.38px;font-size:8.5px;color:#000;left:312.20px;">Jul 24</div><div class="t" style="top:498.38px;font-size:8.5px;color:#000;left:377.30px;">6d</div><div class="t" style="top:498.38px;font-size:8.5px;color:#000;right:66.00px;text-align:right;">0%</div><div style="position:absolute;left:589.5px;top:169px;width:42.5px;height:12px;overflow:hidden"><div class="t" style="left:19px;top:2.3px;font-size:8.7px;letter-spacing:-0.15px;color:#fff;-webkit-text-stroke:0.15px #fff">Week 32, 2008</div></div><svg style="position:absolute;left:0;top:0" width="650" height="527"><g opacity="0.28" font-family="Liberation Sans" font-weight="bold" font-size="17.5" fill="#5a5ab4" stroke="#5a5ab4" stroke-width="1.5" stroke-linejoin="round"><g transform="translate(85.5,133) rotate(-43.5)"><text x="0" y="0" letter-spacing="3.0">3322</text><g transform="translate(52,-13.5)" fill="none" stroke-width="2.8"><path d="M0.5 1.5H13.5M6.5 1.5V15.5M7 6L11.5 9.5"/><g transform="translate(16,0)"><path d="M0.5 4H14.5M4.5 0.5V9M1 8H8.5M1.5 12H8.5M5 9V15.5M0.5 15H8.5M10 0.5Q10.5 11 15 15.5M14.5 7.5Q12.5 12.5 8.5 15.5M12.5 1L14 2.5"/></g><g transform="translate(32,0)"><path d="M3.5 0.5V3.5M0.5 4.5H6.5M2 6.5L3 11M5.5 6.5L4.5 11M0.5 14L6.5 12.5M10.5 0.5V7.5H15M8.5 9H15V15.5H8.5Z"/></g></g></g><g transform="translate(110.5,193.5) rotate(-43.8)"><text x="0" y="0" letter-spacing="3.3">WWW.3322.CC</text></g><g transform="translate(85.5,382) rotate(-43.5)"><text x="0" y="0" letter-spacing="3.0">3322</text><g transform="translate(52,-13.5)" fill="none" stroke-width="2.8"><path d="M0.5 1.5H13.5M6.5 1.5V15.5M7 6L11.5 9.5"/><g transform="translate(16,0)"><path d="M0.5 4H14.5M4.5 0.5V9M1 8H8.5M1.5 12H8.5M5 9V15.5M0.5 15H8.5M10 0.5Q10.5 11 15 15.5M14.5 7.5Q12.5 12.5 8.5 15.5M12.5 1L14 2.5"/></g><g transform="translate(32,0)"><path d="M3.5 0.5V3.5M0.5 4.5H6.5M2 6.5L3 11M5.5 6.5L4.5 11M0.5 14L6.5 12.5M10.5 0.5V7.5H15M8.5 9H15V15.5H8.5Z"/></g></g></g><g transform="translate(110.5,442.5) rotate(-43.8)"><text x="0" y="0" letter-spacing="3.3">WWW.3322.CC</text></g><g transform="translate(379.5,133) rotate(-43.5)"><text x="0" y="0" letter-spacing="3.0">3322</text><g transform="translate(52,-13.5)" fill="none" stroke-width="2.8"><path d="M0.5 1.5H13.5M6.5 1.5V15.5M7 6L11.5 9.5"/><g transform="translate(16,0)"><path d="M0.5 4H14.5M4.5 0.5V9M1 8H8.5M1.5 12H8.5M5 9V15.5M0.5 15H8.5M10 0.5Q10.5 11 15 15.5M14.5 7.5Q12.5 12.5 8.5 15.5M12.5 1L14 2.5"/></g><g transform="translate(32,0)"><path d="M3.5 0.5V3.5M0.5 4.5H6.5M2 6.5L3 11M5.5 6.5L4.5 11M0.5 14L6.5 12.5M10.5 0.5V7.5H15M8.5 9H15V15.5H8.5Z"/></g></g></g><g transform="translate(404.5,193.5) rotate(-43.8)"><text x="0" y="0" letter-spacing="3.3">WWW.3322.CC</text></g><g transform="translate(379.5,382) rotate(-43.5)"><text x="0" y="0" letter-spacing="3.0">3322</text><g transform="translate(52,-13.5)" fill="none" stroke-width="2.8"><path d="M0.5 1.5H13.5M6.5 1.5V15.5M7 6L11.5 9.5"/><g transform="translate(16,0)"><path d="M0.5 4H14.5M4.5 0.5V9M1 8H8.5M1.5 12H8.5M5 9V15.5M0.5 15H8.5M10 0.5Q10.5 11 15 15.5M14.5 7.5Q12.5 12.5 8.5 15.5M12.5 1L14 2.5"/></g><g transform="translate(32,0)"><path d="M3.5 0.5V3.5M0.5 4.5H6.5M2 6.5L3 11M5.5 6.5L4.5 11M0.5 14L6.5 12.5M10.5 0.5V7.5H15M8.5 9H15V15.5H8.5Z"/></g></g></g><g transform="translate(404.5,442.5) rotate(-43.8)"><text x="0" y="0" letter-spacing="3.3">WWW.3322.CC</text></g></g></svg></div></body></html>
